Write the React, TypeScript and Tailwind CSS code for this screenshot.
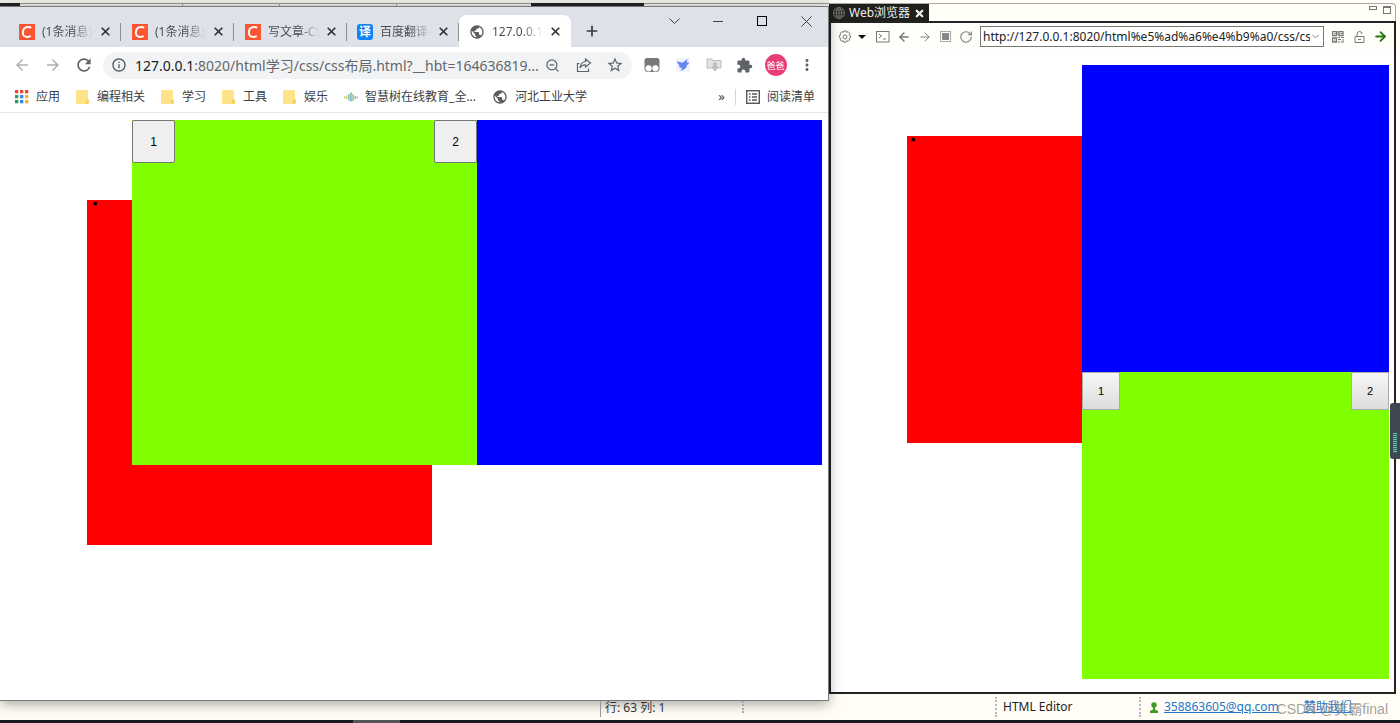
import React from "react";
import { ArrowLeft, ArrowRight, RotateCw, X, Plus, ZoomOut, ChevronDown } from "lucide-react";
import { MdExtension, MdMoreVert, MdPublic, MdOutlineArrowBack, MdOutlineArrowForward, MdRefresh, MdInfoOutline, MdStarBorder } from "react-icons/md";

const Tab = ({ icon, title, active }: { icon: React.ReactNode; title: string; active?: boolean }) => (
  <div className={"relative flex h-8 w-[112px] shrink-0 items-center pt-px pl-[10px] " + (active ? "rounded-t-lg bg-white" : "")}>
    <span className="flex w-[16px] shrink-0 justify-center">{icon}</span>
    <span className="ml-[7px] w-[51px] overflow-hidden whitespace-nowrap bg-linear-to-r from-[#45494d] from-60% to-transparent bg-clip-text text-[12px] text-transparent">{title}</span>
    <button aria-label="关闭" className="ml-1 flex w-[16px] justify-center text-[#2c2f33]">
      <svg width="9" height="9" viewBox="0 0 9 9" stroke="currentColor" strokeWidth="1.600"><path d="M.7.7l7.600 7.600M8.300.7L.7 8.300" /></svg>
    </button>
    {!active && <span className="ml-auto h-[18px] w-px bg-[#8b8e93]" />}
  </div>
);

const CIcon = () => (
  <svg width="16" height="16" viewBox="0 0 16 16"><rect width="16" height="16" fill="#fc5531" /><path d="M12.300 3.600C9 2.300 4 3 3.800 8.400c-.1 4.600 4.200 5.300 8 3.800" fill="none" stroke="#fff" strokeWidth="1.900" /></svg>
);
const TranslateIcon = () => (
  <span className="flex size-4 items-center justify-center rounded-[3px] bg-[#1283f5] text-[12px] font-bold leading-none text-white">译</span>
);
const Folder = () => (
  <svg width="14" height="14" viewBox="0 0 14 14"><path d="M1 0h10a1 1 0 0 1 1 1v8l1 1v2a2 2 0 0 1-2 2H1a1 1 0 0 1-1-1V1a1 1 0 0 1 1-1z" fill="#ffe38a" /><path d="M12.500 9.500c-1.800 0-2.700 1-2.700 2.500v1.700h1.700a1.300 1.300 0 0 0 1.300-1.300z" fill="#f6cf5c" /></svg>
);
const appColors = ["#e8453c", "#e8453c", "#e8453c", "#2f9e57", "#3b82e8", "#f0b428", "#2f9e57", "#3b82e8", "#f0b428"];
const Apps = () => (
  <svg width="14" height="14" viewBox="0 0 14 14">{appColors.map((c, i) => <rect key={i} x={(i % 3) * 5} y={Math.floor(i / 3) * 5} width="3.300" height="3.300" fill={c} />)}</svg>
);
const Wave = () => (
  <svg width="14" height="14" viewBox="0 0 14 14" strokeWidth="1.300"><path d="M.7 6.500v2" stroke="#a5c86a" /><path d="M2.800 5.500v3.500" stroke="#e4b55e" /><path d="M4.900 4v6.500" stroke="#6cba8a" /><path d="M7 2.500v9" stroke="#57a6c8" /><path d="M9.100 4v7" stroke="#75c27d" /><path d="M11.200 6v3" stroke="#8f9fd0" /><path d="M13.300 6.500v2" stroke="#e49a72" /></svg>
);

const IconButton = ({ label, children }: { label: string; children: React.ReactNode }) => (
  <button aria-label={label} className="flex h-7 w-[31px] shrink-0 items-center justify-center text-[#5f6368]">{children}</button>
);

const Bookmark = ({ icon, text }: { icon: React.ReactNode; text: string }) => (
  <a href="#" className="flex shrink-0 items-center gap-[7px] whitespace-nowrap">{icon}{text}</a>
);

const ChromeWindow = () => (
  <section className="relative flex flex-1 flex-col border-t border-r border-b border-[#77797c] bg-white shadow-[0_3px_12px_rgba(0,0,0,0.35)]">
    <div className="flex h-10 items-end bg-[#dee1e7] pl-[9px]">
      <div className="flex gap-px">
        <Tab icon={<CIcon />} title="(1条消息) 前" />
        <Tab icon={<CIcon />} title="(1条消息) 前" />
        <Tab icon={<CIcon />} title="写文章-CSDN" />
      </div>
      <Tab icon={<TranslateIcon />} title="百度翻译-20" />
      <Tab active icon={<MdPublic size={16} color="#5a5d62" />} title="127.0.0.1:80" />
      <button aria-label="新标签页" className="ml-[11px] flex h-8 w-5 items-center justify-center text-[#35383c]"><Plus size={16} strokeWidth={2.5} /></button>
      <div className="ml-auto flex h-full items-start pt-0.5 text-[#3c3f43]">
        <button aria-label="搜索标签页" className="flex h-6 w-11 items-center justify-center"><svg width="11" height="7" viewBox="0 0 11 7" fill="none" stroke="currentColor"><path d="M.5.5l5 5 5-5" /></svg></button>
        <button aria-label="最小化" className="flex h-6 w-11 items-center justify-center"><span className="h-px w-2.5 bg-[#3c3f43]" /></button>
        <button aria-label="最大化" className="flex h-6 w-11 items-center justify-center"><span className="size-2.5 border border-black" /></button>
        <button aria-label="关闭窗口" className="flex h-6 w-11 items-center justify-center"><svg width="11" height="11" viewBox="0 0 11 11" stroke="currentColor"><path d="M.5.5l10 10M10.500.5l-10 10" /></svg></button>
      </div>
    </div>
    <div className="flex h-9 items-center pr-1.5 pl-1.5">
      <div className="flex opacity-50"><IconButton label="后退"><MdOutlineArrowBack size={18} /></IconButton><IconButton label="前进"><MdOutlineArrowForward size={18} /></IconButton></div>
      <IconButton label="重新加载"><MdRefresh size={20} /></IconButton>
      <div className="ml-1 flex h-[27px] min-w-0 flex-1 items-center rounded-full bg-[#f1f3f4] pr-0.5 pl-2">
        <MdInfoOutline size={16} color="#55585c" className="shrink-0" />
        <span className="ml-2 min-w-0 flex-1 whitespace-nowrap text-[14px] text-[#63676b]"><span className="text-[#202124]">127.0.0.1</span>:8020/html学习/css/css布局.html?__hbt=164636819...</span>
        <IconButton label="缩小"><ZoomOut size={15} /></IconButton>
        <IconButton label="分享"><svg width="16" height="16" viewBox="0 0 16 16" fill="none" stroke="currentColor" strokeWidth="1.200"><path d="M3.500 6.500H1.500v8h11v-3M9.500 2l5 4-5 4V7.800C6.500 7.800 5 9 4 11c.3-3.500 2-6 5.500-6.500z" /></svg></IconButton>
        <IconButton label="收藏"><MdStarBorder size={18} /></IconButton>
      </div>
      <div className="ml-1 flex">
        <IconButton label="篡改猴"><svg width="16" height="16" viewBox="0 0 16 16"><path d="M3 1h10a2.500 2.500 0 0 1 2.500 2.500V12A3 3 0 0 1 13 15H3a3 3 0 0 1-2.500-3V3.500A2.500 2.500 0 0 1 3 1z" fill="#77797d" /><circle cx="4.600" cy="11.300" r="3.100" fill="#fff" /><circle cx="11.400" cy="11.300" r="3.100" fill="#fff" /></svg></IconButton>
        <IconButton label="翻译助手"><svg width="14" height="14" viewBox="0 0 14 14"><rect width="14" height="14" fill="#f1f4ff" /><path d="M1 3.200l5.500 1.500L11.500 1 10.800 4.500l2.700.3-2.500 2.400c-.3 3-3 4.800-7 5.300l2.300-2.300C3.500 9.800 2.200 8.300 3.600 7 2.200 6.300 1.200 5 1 3.200z" fill="#6685f0" /></svg></IconButton>
        <IconButton label="下载"><svg width="16" height="16" viewBox="0 0 16 16"><path d="M1 2h5l1 1.500h8V11H1z" fill="#e2e2e2" stroke="#bdbdbd" /><path d="M8 6h2v4h2l-3 4-3-4h2z" fill="#c6c6c6" stroke="#a5a5a5" strokeWidth=".7" /></svg></IconButton>
        <IconButton label="扩展程序"><MdExtension size={17} /></IconButton>
        <button className="flex w-[31px] items-center justify-center"><span className="flex size-[22px] items-center justify-center rounded-full bg-[#e83e78] text-[9px] leading-none text-white">爸爸</span></button>
        <IconButton label="菜单"><MdMoreVert size={18} /></IconButton>
      </div>
    </div>
    <nav className="flex h-[30px] items-center gap-4 border-b border-[#e4e5e7] pr-[13px] pl-[15px] pb-0.5 text-[12px] text-[#3c4043]">
      <Bookmark icon={<Apps />} text="应用" />
      <Bookmark icon={<Folder />} text="编程相关" />
      <Bookmark icon={<Folder />} text="学习" />
      <Bookmark icon={<Folder />} text="工具" />
      <Bookmark icon={<Folder />} text="娱乐" />
      <Bookmark icon={<Wave />} text="智慧树在线教育_全..." />
      <Bookmark icon={<MdPublic size={16} color="#5a5d62" />} text="河北工业大学" />
      <div className="ml-auto flex shrink-0 items-center gap-2.5">
        <button className="text-[13px]">»</button>
        <span className="h-4 w-px bg-[#d4d6d9]" />
        <Bookmark icon={<svg width="14" height="14" viewBox="0 0 14 14" fill="none" stroke="#55585c" strokeWidth="1.400"><rect x=".7" y=".7" width="12.600" height="12.600" /><path d="M3 4h1.500M3 7h1.500M3 10h1.500M6 4h5M6 7h5M6 10h5" /></svg>} text="阅读清单" />
      </div>
    </nav>
    <main className="relative flex flex-1 items-start justify-end bg-white pt-[7px] pr-1.5">
      <div className="absolute top-[87px] left-[87px] size-[345px] bg-[#ff0000] pl-1.5 text-[4px] leading-[9px] text-black">■</div>
      <div className="relative flex size-[345px] items-start justify-between bg-[#80ff00]">
        <button className="size-[43px] rounded-[2px] border border-[#767676] bg-[#efefef] font-['Liberation_Sans',sans-serif] text-[12px] text-black">1</button>
        <button className="size-[43px] rounded-[2px] border border-[#767676] bg-[#efefef] font-['Liberation_Sans',sans-serif] text-[12px] text-black">2</button>
      </div>
      <div className="relative size-[345px] bg-[#0000ff]" />
    </main>
  </section>
);

const WebPane = () => (
  <section className="flex flex-1 flex-col">
    <header className="mr-1 flex h-[18px] items-start rounded-tr border-t border-r border-[#aaa] bg-[#fffff8] pr-1">
      <div className="flex h-[18px] items-center bg-[#1f1f1c] pr-1 pl-1 text-[12px] text-[#eee]">
        <svg width="12" height="12" viewBox="0 0 12 12" fill="none" stroke="#777" strokeWidth=".9"><circle cx="6" cy="6" r="5.500" /><ellipse cx="6" cy="6" rx="2.500" ry="5.500" /><path d="M.5 6h11M6 .5v11M1.500 3h9M1.500 9h9" /></svg>
        <span className="mr-1 ml-1 whitespace-nowrap">Web浏览器</span>
        <button aria-label="关闭视图"><X size={11} strokeWidth={5} /></button>
      </div>
      <div className="mt-0.5 ml-auto flex items-start gap-1.5">
        <button aria-label="最小化视图" className="h-[4px] w-2 border border-[#777]" />
        <button aria-label="最大化视图" className="size-2 border border-t-2 border-[#777]" />
      </div>
    </header>
    <div className="mr-1 flex flex-1 flex-col border-2 border-[#232323] bg-white">
      <div className="flex h-[27px] items-center bg-[#fffff9] pr-1.5 pl-[7px] text-[#777]">
        <button aria-label="设置"><svg width="14" height="14" viewBox="0 0 14 14" fill="none" stroke="currentColor"><circle cx="7" cy="7" r="2" /><path d="M5.900.9h2.200l.5 1.500 1.600-.7 1.500 1.500-.7 1.600 1.500.7v2l-1.500.8.7 1.600-1.500 1.500-1.600-.7-.6 1.500H5.900l-.6-1.500-1.600.7-1.500-1.500.7-1.600-1.600-.7V5.500l1.600-.7-.7-1.600 1.500-1.500 1.600.7z" /></svg></button>
        <button aria-label="更多" className="ml-1.5"><svg width="8" height="4" viewBox="0 0 8 4"><path d="M0 0h8L4 4z" fill="#111" /></svg></button>
        <button aria-label="控制台" className="ml-2.5"><svg width="14" height="12" viewBox="0 0 14 12" fill="none" stroke="currentColor"><rect x=".5" y=".5" width="12.500" height="10.500" /><path d="M3 3l2.500 2L3 7M7 8h3" /></svg></button>
        <button aria-label="后退" className="ml-[7px]"><ArrowLeft size={14} strokeWidth={2.4} /></button>
        <button aria-label="前进" className="ml-[7px]"><ArrowRight size={14} strokeWidth={1.6} /></button>
        <button aria-label="停止" className="ml-2 flex size-[11px] items-center justify-center border border-[#aaa]"><span className="size-[7px] bg-[#888]" /></button>
        <button aria-label="刷新" className="ml-2"><RotateCw size={14} strokeWidth={1.8} /></button>
        <div className="ml-[7px] flex h-[21px] min-w-0 flex-1 items-center border border-[#777] bg-white pr-0.5">
          <input aria-label="地址" className="min-w-0 flex-1 bg-transparent pl-0.5 text-[12px] text-[#222] outline-none" defaultValue="http://127.0.0.1:8020/html%e5%ad%a6%e4%b9%a0/css/css%e5%b8%83" />
          <ChevronDown size={11} />
        </div>
        <button aria-label="二维码" className="ml-2"><svg width="12" height="12" viewBox="0 0 12 12" fill="none" stroke="currentColor"><path d="M.5.5h4v4h-4zM7 .5h4v4H7zM.5 7h4v4h-4z" strokeWidth="1.300" /><path d="M2 2.500h1.500M8.500 2.500H10M2 9h1.500M6 6.500h2M9 6.500h3M6 8.500h3M10 9h2M6 11h2M9 11h3M6 0v4" /></svg></button>
        <button aria-label="锁定" className="ml-2.5"><svg width="11" height="12" viewBox="0 0 11 12" fill="none" stroke="currentColor"><path d="M1 5.500h9v6H1zM3 5.500V3a2.500 2.500 0 0 1 5 0M4 8.500h3" /></svg></button>
        <button aria-label="转到" className="ml-2 text-[#287a12]"><ArrowRight size={15} strokeWidth={3} /></button>
      </div>
      <main className="relative flex flex-1 flex-col items-end pt-[15px] pr-[5px] pb-3">
        <div className="absolute top-[86px] left-[76px] size-[307px] bg-[#ff0000] pl-1 text-[4px] leading-[9px] text-black">■</div>
        <div className="relative size-[307px] bg-[#0000ff]" />
        <div className="relative flex size-[307px] items-start justify-between bg-[#80ff00]">
          <button className="size-[38px] border border-[#aaa] bg-linear-to-b from-[#f6f6f6] to-[#dddddd] font-['Liberation_Sans',sans-serif] text-[11px] text-black">1</button>
          <button className="size-[38px] border border-[#aaa] bg-linear-to-b from-[#f6f6f6] to-[#dddddd] font-['Liberation_Sans',sans-serif] text-[11px] text-black">2</button>
        </div>
      </main>
    </div>
  </section>
);

export default function App() {
  return (
    <div className="relative flex min-h-screen flex-col bg-[#fffdf5] font-['Noto_Sans','Noto_Sans_CJK_SC',sans-serif] text-[#333]">
      <div className="flex flex-1">
        <div className="flex w-[829px] max-w-[60%] shrink-0 flex-col">
          <div className="flex h-1.5 items-end bg-[#eeeee6]">
            <span className="h-[3px] w-5 bg-[#222]" />
            <span className="h-[3px] w-[163px] border-t border-r border-[#999]" />
            <span className="h-[3px] w-[97px] border-t border-r border-[#999]" />
            <span className="h-[3px] w-[117px] border-t border-r border-[#999]" />
            <span className="h-[3px] flex-1 border-t border-[#999]" />
            <span className="h-[3px] w-[113px] bg-[#222]" />
            <span className="h-[3px] w-[185px] border-t border-[#999]" />
          </div>
          <ChromeWindow />
          <footer className="flex h-[19px] items-start justify-end text-[12px] leading-none">
            <span className="relative h-4 w-[142px] border-l border-[#999] pt-px pl-1">行: 63 列: 1</span>
            <span className="relative h-3 w-[87px] border-l-2 border-dotted border-[#aaa]" />
          </footer>
        </div>
        <div className="flex min-w-0 flex-1 flex-col pt-[3px]">
          <WebPane />
          <footer className="relative flex h-[26px] items-center justify-end text-[12px]">
            <span className="flex h-5 w-[144px] items-center border-l-2 border-dotted border-[#bbb] pl-1.5 text-[#222]">HTML Editor</span>
            <div className="flex h-5 w-[261px] items-center border-l-2 border-dotted border-[#bbb] pl-2">
              <svg width="10" height="11" viewBox="0 0 10 11" fill="#3c9a1c"><circle cx="5" cy="3" r="2.700" /><path d="M4 5h2v2.500l3 1.500v2H1V9l3-1.500z" /></svg>
              <a href="#" className="ml-[5px] text-[#2378cc] underline">358863605@qq.com</a>
              <a href="#" className="ml-[25px] whitespace-nowrap text-[#2378cc] underline">赞助我们</a>
            </div>
            <span className="absolute right-3 bottom-0 whitespace-nowrap font-['Liberation_Sans','Noto_Sans_CJK_SC',sans-serif] text-[14px] text-[#888]/80">CSDN @笑霸final</span>
          </footer>
        </div>
      </div>
      <div className="flex h-[3px] bg-[#1b1921]"><span className="ml-[353px] w-[47px] bg-[#555]" /></div>
      <div className="absolute top-[403px] right-0 flex h-14 w-[10px] items-end justify-center rounded-l-[3px] bg-[#414752] pb-1.5">
        <span className="h-5 w-1 bg-[repeating-linear-gradient(#65bda4_0_1px,#376760_1px_2px)]" />
      </div>
    </div>
  );
}
